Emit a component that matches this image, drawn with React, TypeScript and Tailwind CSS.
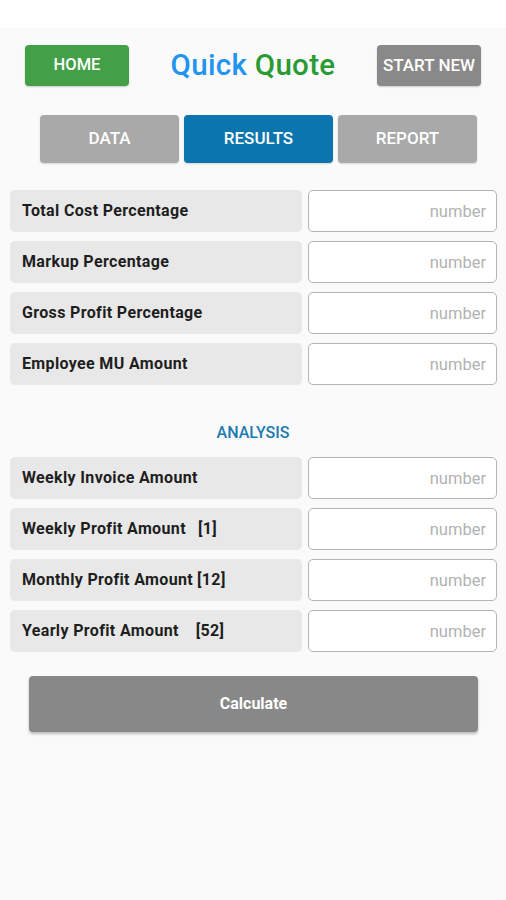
const topRows = [
  "Total Cost Percentage",
  "Markup Percentage",
  "Gross Profit Percentage",
  "Employee MU Amount",
];

const analysisRows = [
  { label: "Weekly Invoice Amount", tag: "" },
  { label: "Weekly Profit Amount", tag: "[1]", pad: "ml-[12px]" },
  { label: "Monthly Profit Amount", tag: "[12]", pad: "ml-[4px]" },
  { label: "Yearly Profit Amount", tag: "[52]", pad: "ml-[17px]" },
];

function Row({ label, tag, pad }: { label: string; tag?: string; pad?: string }) {
  return (
    <div className="flex h-[42px] gap-[6px]">
      <div className="flex w-[292px] items-center rounded-[5px] bg-[#e8e8e8] pl-[12px] text-[16px] font-bold tracking-[0.35px] text-[#1e1e1e]">
        <span>{label}</span>
        {tag ? <span className={pad}>{tag}</span> : null}
      </div>
      <input
        type="text"
        placeholder="number"
        className="h-[42px] w-[189px] rounded-[5px] border-[1.5px] border-[#b4b4b4] bg-white pr-[10px] text-right text-[16.5px] text-[#222] outline-none placeholder:text-[#b2b2b2]"
      />
    </div>
  );
}

export default function App() {
  return (
    <div className="min-h-[900px] w-[506px] bg-white font-['Roboto',sans-serif]">
      <div className="h-[28px] bg-white" />
      <div className="min-h-[872px] bg-[#fafafa] pt-[17px]">
        <div className="flex items-center justify-between px-[25px]">
          <button className="h-[41px] w-[104px] rounded-[4px] bg-[#43a047] text-[16.5px] font-medium text-white shadow-[0_1px_2px_rgba(0,0,0,0.2)]">
            HOME
          </button>
          <h1 className="text-[29.5px] font-medium leading-none tracking-[0.3px]">
            <span className="text-[#2194f0]">Quick</span>{" "}
            <span className="text-[#2a9a35]">Quote</span>
          </h1>
          <button className="h-[41px] w-[104px] rounded-[4px] bg-[#898989] text-[17px] font-medium text-white shadow-[0_1px_2px_rgba(0,0,0,0.2)]">
            START NEW
          </button>
        </div>

        <div className="mt-[29px] flex gap-[5px] pl-[40px]">
          <button className="h-[48px] w-[139px] rounded-[4px] bg-[#a9a9a9] text-[17px] font-medium text-white shadow-[0_1px_2px_rgba(0,0,0,0.15)]">
            DATA
          </button>
          <button className="h-[48px] w-[149px] rounded-[4px] bg-[#0b76ad] text-[17px] font-medium text-white shadow-[0_1px_2px_rgba(0,0,0,0.15)]">
            RESULTS
          </button>
          <button className="h-[48px] w-[139px] rounded-[4px] bg-[#a9a9a9] text-[17px] font-medium text-white shadow-[0_1px_2px_rgba(0,0,0,0.15)]">
            REPORT
          </button>
        </div>

        <div className="mt-[27px] flex flex-col gap-[9px] pl-[10px]">
          {topRows.map((label) => (
            <Row key={label} label={label} />
          ))}
        </div>

        <div className="mt-[37px] mb-[13px] text-center text-[16px] font-medium leading-[22px] text-[#1b7bb0]">
          ANALYSIS
        </div>

        <div className="flex flex-col gap-[9px] pl-[10px]">
          {analysisRows.map((r) => (
            <Row key={r.label} label={r.label} tag={r.tag} pad={r.pad} />
          ))}
        </div>

        <div className="mt-[24px] pl-[29px]">
          <button className="h-[56px] w-[449px] rounded-[4px] bg-[#888888] text-[16px] font-bold text-white shadow-[0_2px_3px_rgba(0,0,0,0.25)]">
            Calculate
          </button>
        </div>
      </div>
    </div>
  );
}
